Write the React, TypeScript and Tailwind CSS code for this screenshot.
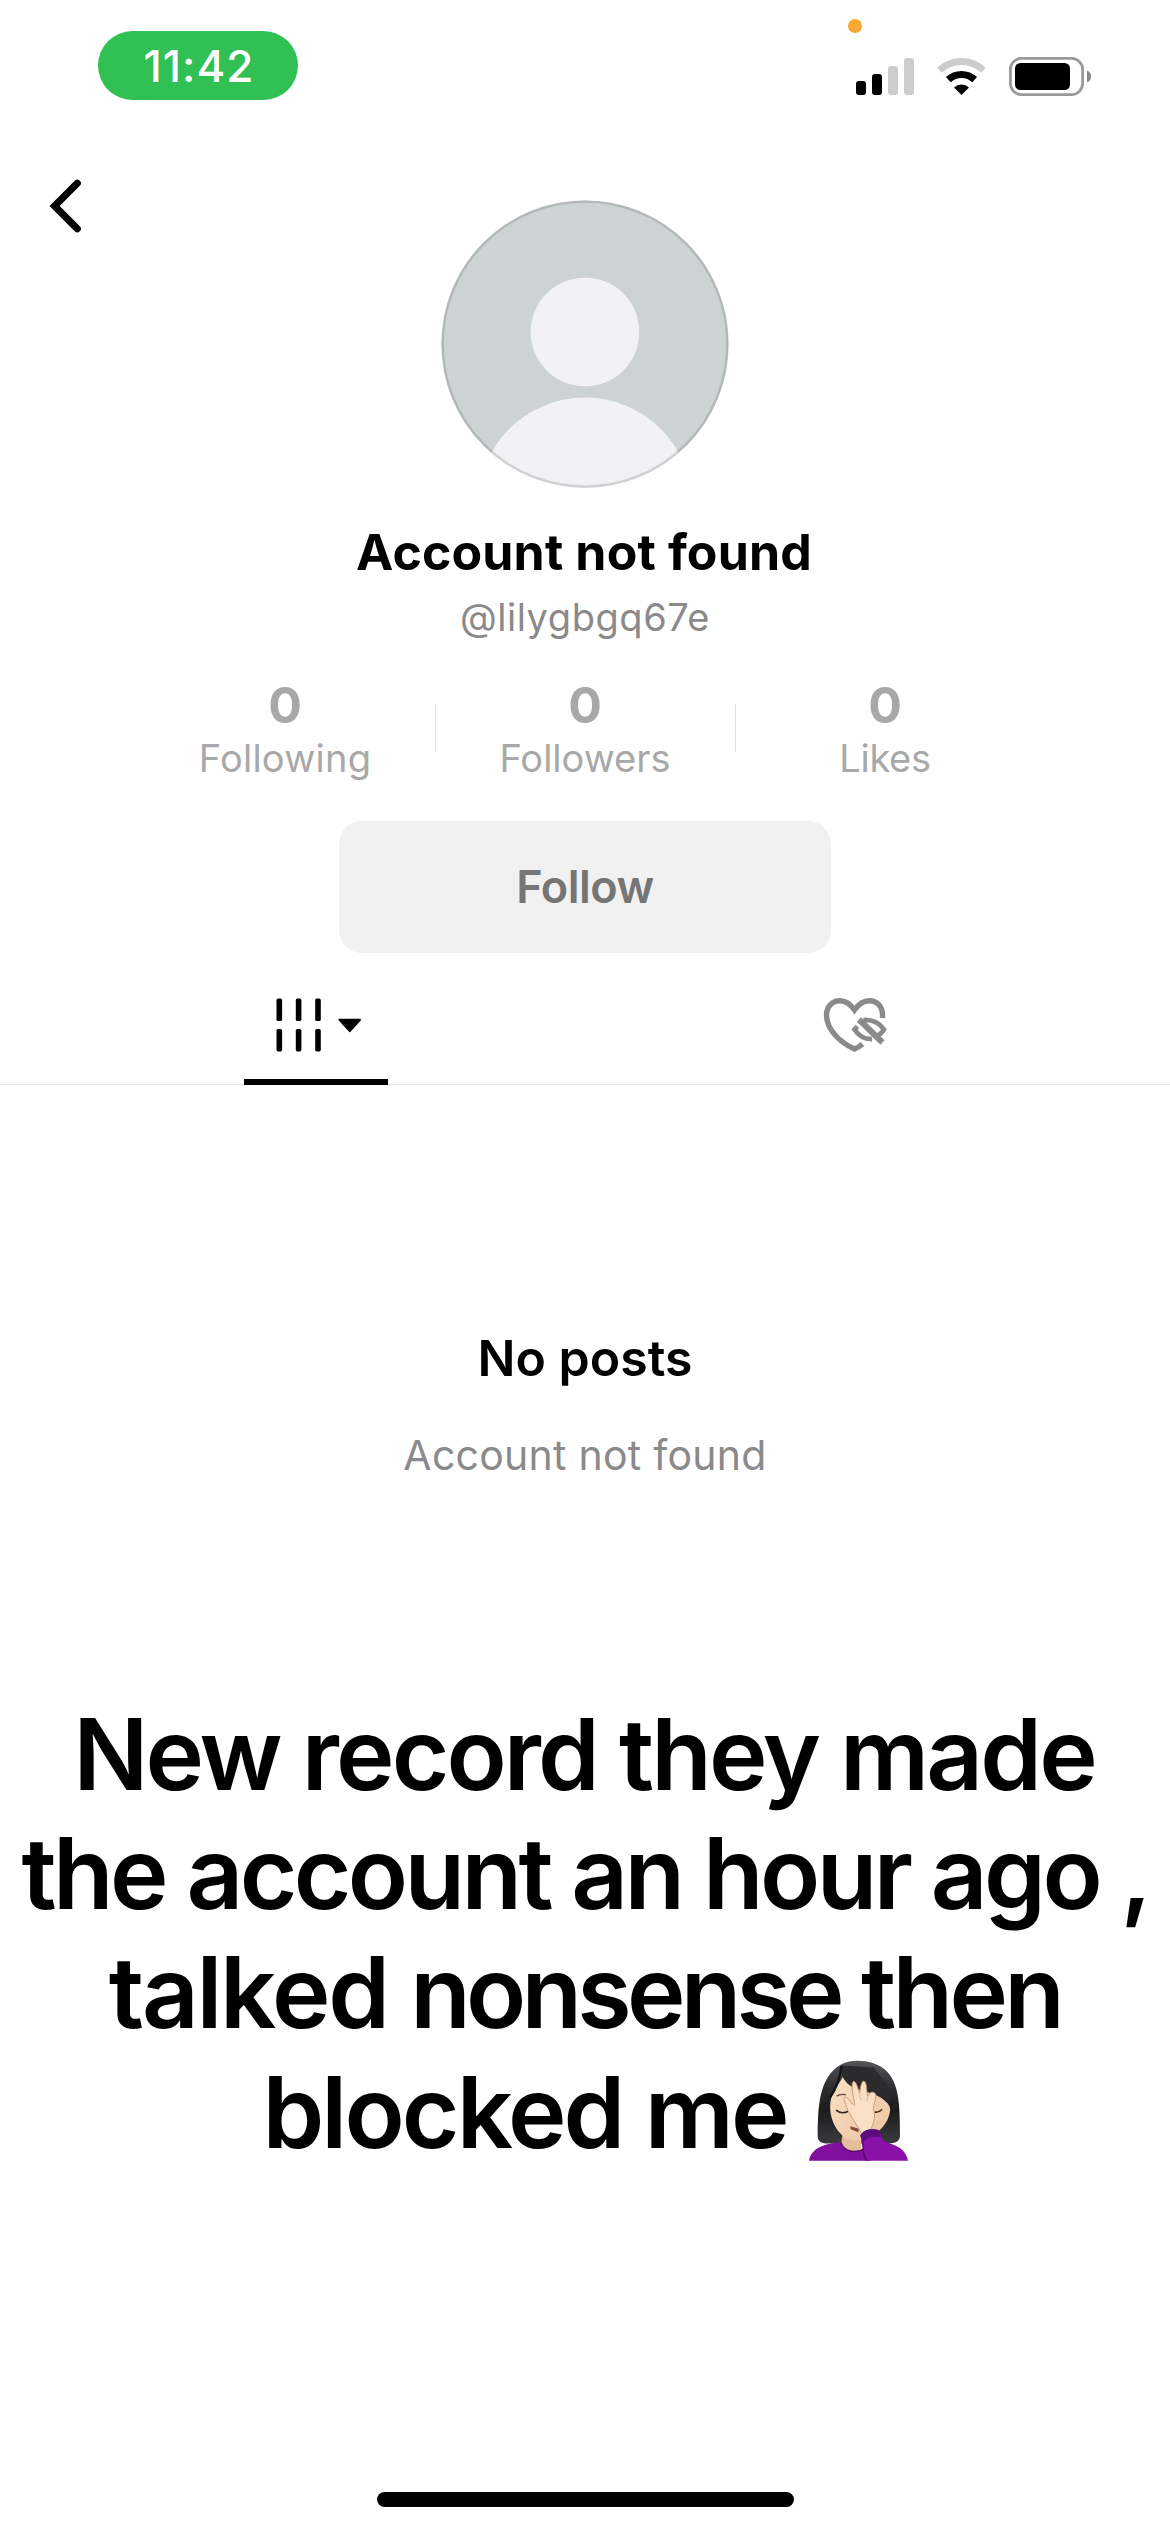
const stats = [
    { value: "0", label: "Following", spacing: "tracking-[0.25px]" },
    { value: "0", label: "Followers", spacing: "tracking-normal" },
    { value: "0", label: "Likes", spacing: "tracking-[-0.3px]" },
];

function StatusBar() {
    return (
        <header className="relative flex justify-between h-[170px] pl-[98px] pr-[78px]">
            <div className="mt-[31px] w-[200px] h-[69px] pl-[2px] rounded-full bg-[#30c053] flex items-center justify-center">
                <span className="text-white text-[44px] leading-none font-medium tracking-[1px]">11:42</span>
            </div>
            <span className="absolute left-[848px] top-[19px] size-[14px] rounded-full bg-[#f9a72f]" />
            <div className="mt-[57px] flex items-start">
                <svg width="60" height="38" viewBox="0 0 60 38">
                    <rect x="0" y="24" width="10" height="14" rx="3" fill="#000" />
                    <rect x="16" y="17" width="10" height="21" rx="3" fill="#000" />
                    <rect x="32" y="9" width="10" height="29" rx="3" fill="#ccc" />
                    <rect x="48" y="1" width="10" height="37" rx="3" fill="#ccc" />
                </svg>
                <svg className="ml-[20px]" width="52" height="38" viewBox="0 0 52 38" fill="none">
                    <path d="M3.5 13.2 A32.5 32.5 0 0 1 47.5 13.2" stroke="#ccc" strokeWidth="7" />
                    <path d="M12.3 22.6 A19.5 19.5 0 0 1 38.7 22.6" stroke="#000" strokeWidth="7" />
                    <path d="M25.5 38 L18 30.4 A11 11 0 0 1 33 30.4 Z" fill="#000" />
                </svg>
                <svg className="ml-[21px]" width="83" height="39" viewBox="0 0 83 39">
                    <rect x="1.4" y="1.4" width="72.2" height="36.2" rx="11" fill="none" stroke="#999" strokeWidth="2.8" />
                    <rect x="6" y="6" width="55" height="27" rx="5.5" fill="#000" />
                    <path d="M78 13.5 Q82 15 82 19.5 Q82 24 78 25.5 Z" fill="#888" />
                </svg>
            </div>
        </header>
    );
}

function Avatar() {
    return (
        <svg className="mt-[30px]" width="288" height="288" viewBox="0 0 288 288">
            <defs>
                <clipPath id="round">
                    <circle cx="144" cy="144" r="143.5" />
                </clipPath>
            </defs>
            <g clipPath="url(#round)">
                <rect width="288" height="288" fill="#cdd3d3" />
                <circle cx="144" cy="132" r="54.3" fill="#f2f2f5" />
                <circle cx="144" cy="304.5" r="107" fill="#f2f2f5" />
            </g>
            <circle cx="144" cy="144" r="142.5" fill="none" stroke="#000" strokeOpacity="0.13" strokeWidth="2.6" />
        </svg>
    );
}

function Tabs() {
    return (
        <nav className="h-[132px] grid grid-cols-2 px-[47px] border-b border-[#e3e3e3]">
            <div className="flex flex-col items-center">
                <svg className="mt-[45px]" width="92" height="54" viewBox="-4 0 92 54">
                    {[2.5, 21.8, 41.2].map((x) => (
                        <g key={x}>
                            <rect x={x} y="0.6" width="5.6" height="22.4" rx="1.6" />
                            <rect x={x} y="31" width="5.6" height="22.4" rx="1.6" />
                        </g>
                    ))}
                    <path d="M65.5 21.8 H86 L75.8 33.2 Z" stroke="#000" strokeWidth="2" strokeLinejoin="round" />
                </svg>
                <div className="mt-[27px] w-[144px] h-[6px] shrink-0 bg-black" />
            </div>
            <div className="flex justify-center">
                <svg className="mt-[44px] ml-[3px]" width="66" height="57" viewBox="0 0 66 57" fill="none" stroke="#8a8a8a" strokeWidth="5.4">
                    <path d="M59.5 21 C60.5 8.5 53 3.7 46.5 3.7 C39.5 3.7 35 8 31.5 13 C28 8 23.5 3.7 17 3.7 C9 3.7 3.5 10 3.5 18 C3.5 33 17.5 45.5 31.5 52 C34.5 50.8 37 49.2 39.5 47" />
                    <path d="M36 22.5 L59.5 45.5" strokeWidth="6" />
                    <path d="M40.5 23 C49.5 22.3 57 26.5 61 32.5 C59.5 35 57.5 37 55 38.5" strokeWidth="4.8" />
                    <path d="M34.5 29.5 L31.5 32.5 C35.5 38.5 42 42.3 49 42" strokeWidth="4.8" />
                </svg>
            </div>
        </nav>
    );
}

function Facepalm() {
    return (
        <svg className="ml-[22px] mt-[7px]" width="99" height="101" viewBox="55 58 297 302" role="img" aria-label="🤦🏻‍♀️">
            <defs>
                <linearGradient id="hair" x1="0" y1="0" x2="0" y2="1">
                    <stop offset="0" stopColor="#55565a" />
                    <stop offset="0.3" stopColor="#303033" />
                    <stop offset="0.6" stopColor="#1c1b1d" />
                    <stop offset="1" stopColor="#3b3b3d" />
                </linearGradient>
                <linearGradient id="skin" x1="0" y1="0" x2="1" y2="1">
                    <stop offset="0" stopColor="#fbe0c6" />
                    <stop offset="1" stopColor="#ebc4a0" />
                </linearGradient>
            </defs>
            <path d="M150 72 C180 52 250 55 285 88 C325 125 328 190 328 285 C328 298 318 308 296 308 H112 C90 308 81 300 81 286 C82 200 84 110 150 72 Z" fill="url(#hair)" />
            <path d="M157 270 H212 V325 L180 336 L150 320 Z" fill="#e5bd9b" />
            <path d="M120 180 C124 150 145 130 157 108 C180 145 245 150 278 176 C296 190 300 200 298 212 C290 262 240 300 192 300 C150 298 110 240 120 180 Z" fill="url(#skin)" />
            <path d="M152 74 C148 95 156 118 178 134 C215 158 262 152 296 184 L300 150 L250 80 Z" fill="#2b2b2e" />
            <path d="M152 76 C150 100 142 135 118 170" fill="none" stroke="#141315" strokeWidth="7" />
            <path d="M55 360 C60 328 90 308 152 304 C160 334 198 338 222 322 L240 360 Z" fill="#82109f" />
            <path d="M151 306 C162 336 200 338 222 322" fill="none" stroke="#520a6c" strokeWidth="4" />
            <path d="M138 166 Q150 158 166 162" fill="none" stroke="#5f4638" strokeWidth="4" />
            <path d="M136 208 Q152 221 172 212" fill="none" stroke="#33241d" strokeWidth="5" />
            <path d="M252 214 Q264 216 274 206" fill="none" stroke="#33241d" strokeWidth="5" />
            <path d="M178 256 L205 264 L203 274 L180 265 Z" fill="#854a3d" />
            <path d="M164 168 C176 172 184 194 192 192 C188 166 180 138 187 123 C196 118 201 142 207 158 C209 142 212 121 219 121 C229 123 226 144 231 166 C236 158 242 150 251 156 C262 163 250 184 248 204 C256 226 250 244 240 268 L214 280 C199 252 176 224 168 198 C162 185 156 168 164 168 Z" fill="#fadfc5" stroke="#cf9c78" strokeWidth="3" />
            <path d="M205 160 L212 178 M231 166 L228 182" stroke="#d6a988" strokeWidth="2.5" />
            <path d="M209 284 C220 264 244 262 266 268 C274 286 270 298 290 306 C325 314 348 332 352 360 H226 C216 335 218 310 209 284 Z" fill="#8a12a8" />
            <path d="M209 284 C220 264 244 262 266 268 L270 290 C250 284 228 290 216 304 Z" fill="#5d0c7c" />
            <path d="M216 304 C219 328 216 344 228 360" fill="none" stroke="#520a6c" strokeWidth="4" />
        </svg>
    );
}

export default function App() {
    return (
        <div className="w-[1170px] h-[2530px] overflow-hidden bg-white text-black font-[Inter,sans-serif] flex flex-col">
            <StatusBar />

            <div className="h-[352px] grid grid-cols-3 shrink-0">
                <svg className="mt-[6px] ml-[46px]" width="44" height="60" viewBox="0 0 44 60">
                    <path d="M31.3 7.2 L8.6 30 L31.3 52.8" fill="none" stroke="#000" strokeWidth="7.2" strokeLinecap="round" />
                </svg>
                <div className="flex justify-center items-start">
                    <Avatar />
                </div>
            </div>

            <h1 className="h-[60px] leading-[60px] pr-[2px] text-center text-[50px] font-bold tracking-[0.15px] text-black">Account not found</h1>
            <p className="h-[70px] leading-[70px] text-center text-[38px] tracking-[0.55px] text-[#8a8a8a]">@lilygbgq67e</p>

            <div className="mt-[23px] px-[135px] flex items-center text-[#a8a8a8]">
                {stats.map((stat, i) => (
                    <div key={stat.label} className="w-[300px] flex items-center">
                        <div className={i > 0 ? "w-px h-[48px] bg-[#dedede]" : "w-px h-[48px]"} />
                        <div className="flex-1 pr-px text-center">
                            <p className="h-[60px] leading-[60px] text-[50px] font-bold">{stat.value}</p>
                            <p className={"h-[46px] leading-[46px] text-[38px] " + stat.spacing}>{stat.label}</p>
                        </div>
                    </div>
                ))}
            </div>

            <button className="mt-[40px] mx-auto w-[492px] h-[132px] shrink-0 rounded-[23px] bg-[#f1f1f1] text-[#757575] text-[45px] font-semibold tracking-[-0.5px]">Follow</button>

            <Tabs />

            <section className="mt-[243px] text-center">
                <h2 className="h-[60px] leading-[60px] text-[50px] font-semibold">No posts</h2>
                <p className="mt-[42px] h-[50px] leading-[50px] text-[41px] tracking-[0.25px] text-[#8a8a8a]">Account not found</p>
            </section>

            <section className="mt-[215px] text-center text-[99px] leading-[119.2px] font-semibold whitespace-nowrap">
                <p className="tracking-[-2.9px] pr-[2px]">New record they made</p>
                <p className="tracking-[-3.58px]">the account an hour ago ,</p>
                <p className="tracking-[-3.67px]">
                    <span className="tracking-[-2.3px]">talked </span>
                    <span className="tracking-[-4.8px]">nonsense</span> then
                </p>
                <div className="flex justify-center">
                    <p className="tracking-[-2.85px]">blocked me</p>
                    <Facepalm />
                </div>
            </section>

            <div className="mt-auto mb-[23px] mx-auto w-[417px] h-[15px] shrink-0 rounded-full bg-black" />
        </div>
    );
}
